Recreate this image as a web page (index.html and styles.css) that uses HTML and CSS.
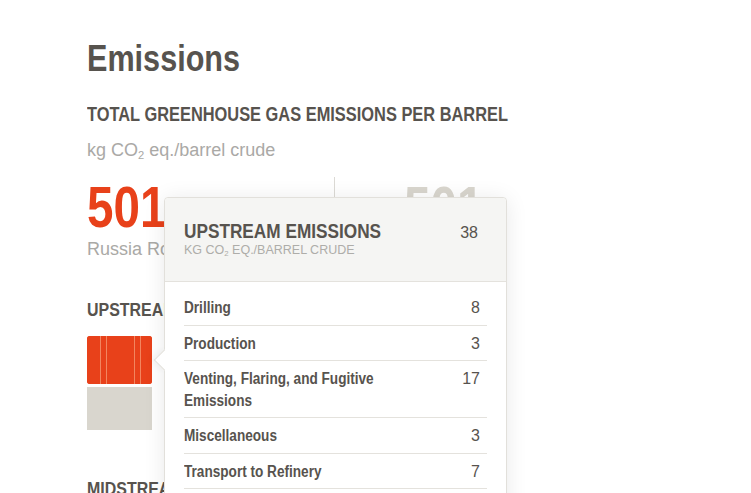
FILE: index.html
```html
<!DOCTYPE html>
<html lang="en">
<head>
<meta charset="utf-8">
<title>Emissions</title>
<link rel="stylesheet" href="styles.css">
</head>
<body>
<div class="page">
  <h1 class="title">Emissions</h1>
  <h2 class="subhead">TOTAL GREENHOUSE GAS EMISSIONS PER BARREL</h2>
  <p class="unit">kg CO<sub>2</sub> eq./barrel crude</p>

  <div class="stats">
    <div class="stat stat-main">
      <div class="num num-red">501</div>
      <div class="stat-label">Russia Romashkino</div>
    </div>
    <div class="stat stat-compare">
      <div class="num num-gray">501</div>
    </div>
  </div>

  <section class="phase">
    <h3 class="phase-title">UPSTREAM EMISSIONS</h3>
    <div class="bars">
      <div class="bar bar-red">
        <span class="seg" style="flex-grow:8"></span>
        <span class="seg" style="flex-grow:3"></span>
        <span class="seg" style="flex-grow:17"></span>
        <span class="seg" style="flex-grow:3"></span>
        <span class="seg" style="flex-grow:7"></span>
      </div>
      <div class="bar bar-gray"></div>
    </div>
  </section>

  <section class="phase phase-mid">
    <h3 class="phase-title">MIDSTREAM EMISSIONS</h3>
  </section>

  <div class="tooltip">
    <div class="tip-head">
      <div class="tip-title-row">
        <span class="tip-title">UPSTREAM EMISSIONS</span>
        <span class="tip-total">38</span>
      </div>
      <div class="tip-unit">KG CO<sub>2</sub> EQ./BARREL CRUDE</div>
    </div>
    <ul class="tip-list">
      <li class="tip-row"><span class="tip-label">Drilling</span><span class="tip-val">8</span></li>
      <li class="tip-row"><span class="tip-label">Production</span><span class="tip-val">3</span></li>
      <li class="tip-row"><span class="tip-label">Venting, Flaring, and Fugitive Emissions</span><span class="tip-val">17</span></li>
      <li class="tip-row"><span class="tip-label">Miscellaneous</span><span class="tip-val">3</span></li>
      <li class="tip-row"><span class="tip-label">Transport to Refinery</span><span class="tip-val">7</span></li>
      <li class="tip-row"><span class="tip-label">Offsite Emissions</span><span class="tip-val">0</span></li>
    </ul>
  </div>
</div>
</body>
</html>
```

FILE: styles.css
```css
* { box-sizing: border-box; }

html, body {
  margin: 0;
  padding: 0;
  background: #ffffff;
  overflow: hidden;
}

body {
  font-family: "Liberation Sans", Arial, sans-serif;
  color: #57534e;
}

.page {
  position: relative;
  width: 751px;
  height: 493px;
  padding: 39px 0 0 87px;
  overflow: hidden;
}

/* condensed bold headings: Arial-metric bold, horizontally compressed */
.title,
.subhead,
.num,
.phase-title,
.tip-title,
.tip-label {
  font-family: "Liberation Sans", Arial, sans-serif;
  font-weight: 700;
  transform-origin: 0 0;
}

.title {
  margin: 0;
  font-size: 36px;
  line-height: 40px;
  color: #57534e;
  transform: scaleX(0.85);
}

.subhead {
  margin: 23px 0 0;
  font-size: 20px;
  line-height: 24px;
  color: #57534e;
  white-space: nowrap;
  transform: scaleX(0.82);
}

.unit {
  margin: 13px 0 0;
  font-size: 18px;
  line-height: 22px;
  color: #aaa9a6;
}

sub {
  font-size: 0.62em;
  line-height: 0;
  vertical-align: -0.25em;
}

.stats {
  display: flex;
  margin-top: 16px;
}

.stat-main {
  width: 247px;
}

.stat-compare {
  border-left: 1px solid #dcdad5;
  padding-left: 69px;
  height: 84px;
}

.num {
  font-size: 58px;
  line-height: 60px;
  transform: scaleX(0.82);
}

.num-red { color: #e8411a; }
.num-gray { color: #d9d6ce; }

.stat-label {
  font-size: 18px;
  line-height: 22px;
  margin-top: 1px;
  color: #aaa9a6;
  white-space: nowrap;
}

.phase-title {
  margin: 0;
  font-size: 19px;
  line-height: 22px;
  color: #57534e;
  white-space: nowrap;
  transform: scaleX(0.84);
}

.phase {
  margin-top: 38px;
}

.phase-mid {
  margin-top: 48px;
}

.bars {
  margin-top: 15px;
  width: 65px;
  display: flex;
  flex-direction: column;
  gap: 3px;
}

.bar {
  width: 65px;
}

.bar-red {
  height: 48px;
  display: flex;
  border-radius: 3px;
  overflow: hidden;
  background: #e8411a;
}

.seg {
  flex-basis: 0;
  height: 100%;
  background: #e8411a;
  border-left: 1px solid #f2855f;
}

.seg:first-child { border-left: 0; }

.bar-gray {
  height: 43px;
  background: #d9d6ce;
}

/* Tooltip overlay */
.tooltip {
  position: absolute;
  left: 164px;
  top: 197px;
  width: 343px;
  height: 330px;
  background: #ffffff;
  border: 1px solid #e2e0db;
  border-radius: 4px;
  box-shadow: 0 2px 22px rgba(0, 0, 0, 0.09);
}

.tooltip::before {
  content: "";
  position: absolute;
  left: -8.5px;
  top: 153.5px;
  width: 15px;
  height: 15px;
  background: #ffffff;
  border-left: 1px solid #e2e0db;
  border-bottom: 1px solid #e2e0db;
  transform: rotate(45deg);
  box-shadow: -3px 3px 6px rgba(0, 0, 0, 0.04);
}

.tip-head {
  position: relative;
  background: #f5f5f3;
  border-bottom: 1px solid #e4e2dd;
  border-radius: 4px 4px 0 0;
  padding: 21px 28px 24px 19px;
}

.tip-title-row {
  display: flex;
  justify-content: space-between;
  align-items: baseline;
  height: 24px;
}

.tip-title {
  display: inline-block;
  font-size: 21px;
  line-height: 24px;
  color: #57534e;
  white-space: nowrap;
  transform: scaleX(0.82);
}

.tip-total {
  font-size: 16px;
  line-height: 20px;
  color: #57534e;
}

.tip-unit {
  font-size: 12.5px;
  line-height: 14px;
  color: #aeada9;
}

.tip-list {
  position: relative;
  list-style: none;
  margin: 0;
  padding: 8px 19px 0 19px;
  background: #ffffff;
}

.tip-row {
  display: flex;
  align-items: flex-start;
  padding: 7px 7px 6px 0;
  border-bottom: 1px solid #e4e2dd;
  line-height: 21.5px;
}

.tip-label {
  display: block;
  flex: 0 1 280px;
  font-size: 16px;
  color: #57534e;
  transform: scaleX(0.85);
}

.tip-val {
  margin-left: auto;
  font-size: 16px;
  color: #57534e;
}
```
